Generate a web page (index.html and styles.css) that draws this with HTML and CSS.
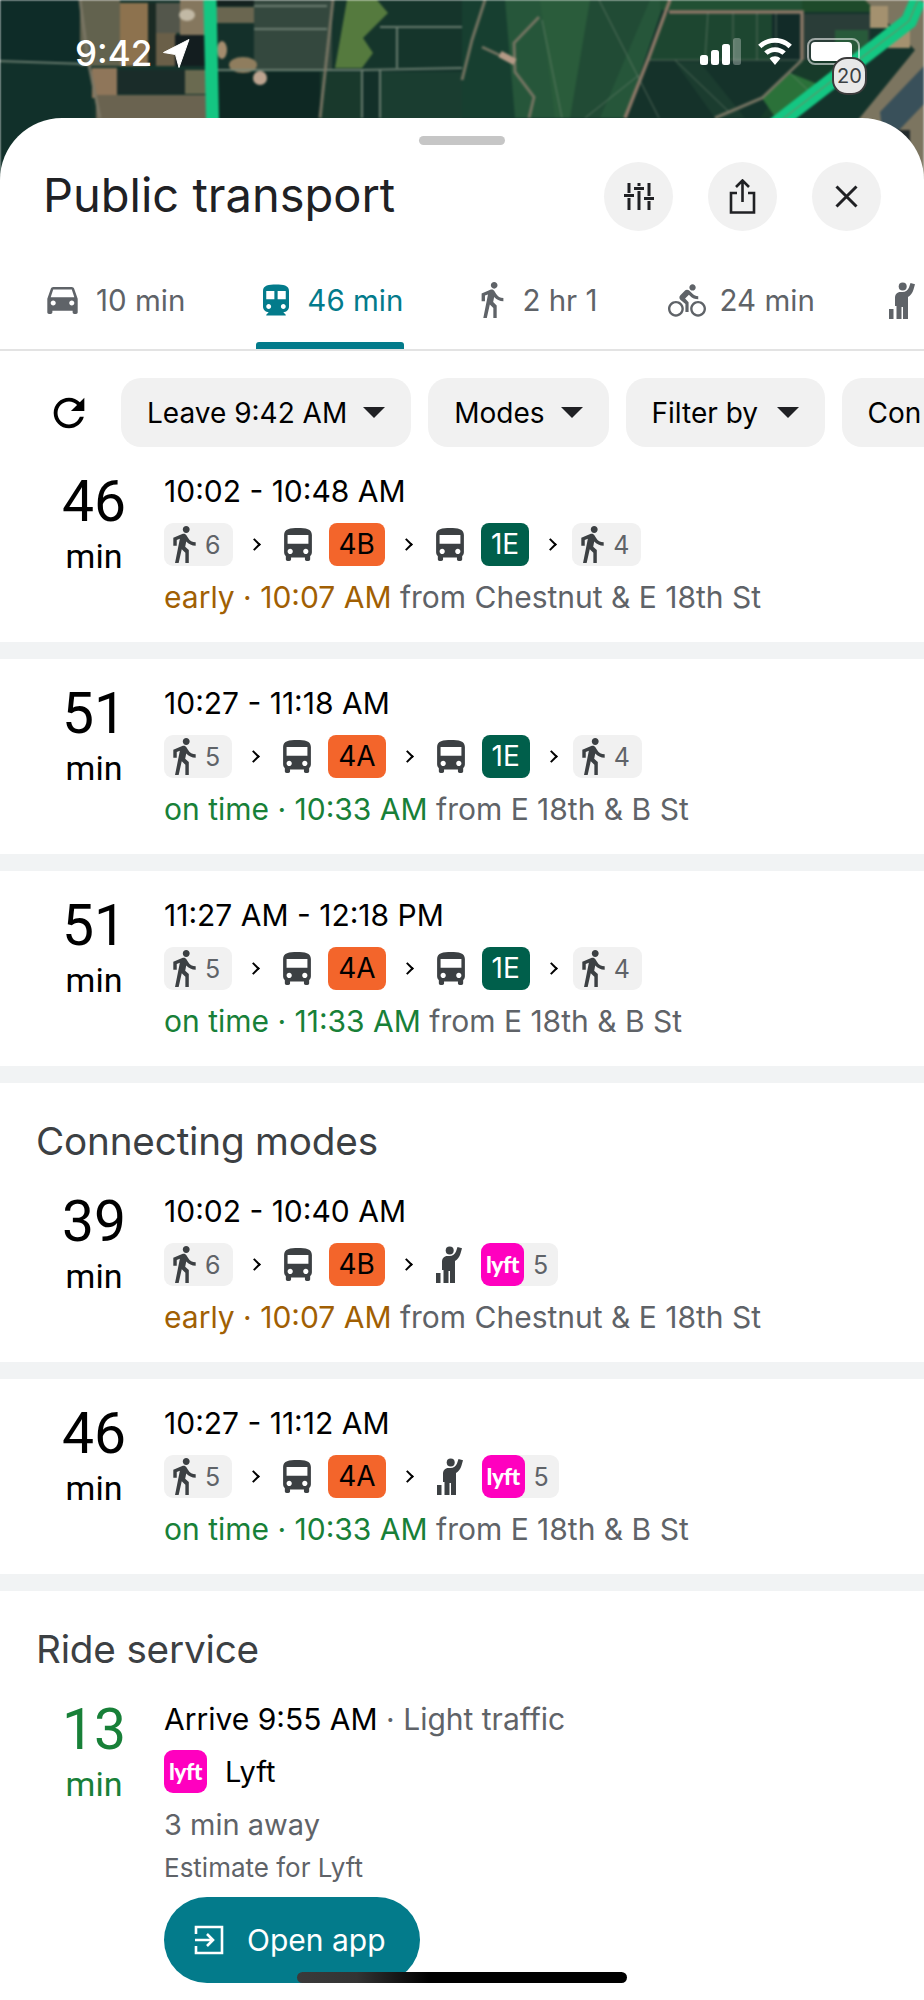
FILE: index.html
```html
<!DOCTYPE html>
<html lang="en">
<head>
<meta charset="utf-8">
<title>Public transport</title>
<link rel="stylesheet" href="styles.css">
</head>
<body>
<svg class="defs" width="0" height="0" aria-hidden="true">
  <symbol id="i-car" viewBox="3 5 18 16"><path fill-rule="evenodd" d="M18.92 6.01C18.72 5.42 18.16 5 17.5 5h-11c-.66 0-1.21.42-1.42 1.01L3 12v8c0 .55.45 1 1 1h1c.55 0 1-.45 1-1v-1h12v1c0 .55.45 1 1 1h1c.55 0 1-.45 1-1v-8l-2.08-5.99zM6.5 16c-.83 0-1.5-.67-1.5-1.5S5.67 13 6.5 13s1.5.67 1.5 1.5S7.33 16 6.5 16zm11 0c-.83 0-1.5-.67-1.5-1.5s.67-1.5 1.5-1.5 1.5.67 1.5 1.5-.67 1.5-1.5 1.5zM5 11l1.5-4.5h11L19 11H5z"/></symbol>
  <symbol id="i-train" viewBox="4 2 16 19"><path fill-rule="evenodd" d="M12 2c-4.42 0-8 .5-8 4v9.5C4 17.43 5.57 19 7.5 19L6 20.5v.5h12v-.5L16.5 19c1.93 0 3.5-1.57 3.5-3.5V6c0-3.5-3.58-4-8-4zM7.5 17c-.83 0-1.5-.67-1.5-1.5S6.67 14 7.5 14s1.5.67 1.5 1.5S8.33 17 7.5 17zm3.5-6H6V6h5v5zm5.5 6c-.83 0-1.5-.67-1.5-1.5s.67-1.5 1.5-1.5 1.5.67 1.5 1.5-.67 1.5-1.5 1.5zm1.5-6h-5V6h5v5z"/></symbol>
  <symbol id="i-walk" viewBox="6 1.5 13 21.5"><path d="M13.5 5.5c1.1 0 2-.9 2-2s-.9-2-2-2-2 .9-2 2 .9 2 2 2zM9.8 8.9L7 23h2.1l1.8-8 2.1 2v6h2v-7.5l-2.1-2 .6-3C14.8 12 16.8 13 19 13v-2c-1.9 0-3.5-1-4.3-2.4l-1-1.6c-.4-.6-1-1-1.7-1-.3 0-.5.1-.8.1L6 8.3V13h2V9.6l1.8-.7"/></symbol>
  <symbol id="i-bike" viewBox="0 1.5 24 20.5"><path d="M15.5 5.5c1.1 0 2-.9 2-2s-.9-2-2-2-2 .9-2 2 .9 2 2 2zM5 12c-2.8 0-5 2.2-5 5s2.2 5 5 5 5-2.2 5-5-2.2-5-5-5zm0 8.5c-1.9 0-3.5-1.6-3.5-3.5s1.6-3.5 3.5-3.5 3.5 1.6 3.5 3.5-1.6 3.5-3.5 3.5zm5.8-10l2.4-2.4.8.8c1.3 1.3 3 2.1 5.1 2.1V9c-1.5 0-2.7-.6-3.6-1.5l-1.9-1.9c-.5-.4-1-.6-1.6-.6s-1.1.2-1.4.6L7.8 8.4c-.4.4-.6.9-.6 1.4 0 .6.2 1.1.6 1.4L11 14v5h2v-6.2l-2.2-2.3zM19 12c-2.8 0-5 2.2-5 5s2.2 5 5 5 5-2.2 5-5-2.2-5-5-5zm0 8.5c-1.9 0-3.5-1.6-3.5-3.5s1.6-3.5 3.5-3.5 3.5 1.6 3.5 3.5-1.6 3.5-3.5 3.5z"/></symbol>
  <symbol id="i-hail" viewBox="0 0 27 37"><circle cx="13.700" cy="4.400" r="4"/><path d="M7.500 37V24H6v-8c0-3.500 2-6 5.500-6h2c3 0 5.500-2 6.500-4.500L21.500 1 26 2.200l-1.500 5.300c-1 3.500-3 6-5.500 7.500V37h-5V25h-1.500v12zM0 27h4.500v10H0z"/></symbol>
  <symbol id="i-bus" viewBox="4 2 16 19"><path fill-rule="evenodd" d="M4 16c0 .88.39 1.67 1 2.220V20c0 .55.45 1 1 1h1c.55 0 1-.45 1-1v-1h8v1c0 .55.45 1 1 1h1c.55 0 1-.45 1-1v-1.780c.61-.55 1-1.340 1-2.220V6c0-3.500-3.580-4-8-4s-8 .5-8 4v10zm3.500 1c-.83 0-1.500-.67-1.500-1.500S6.670 14 7.500 14s1.500.67 1.500 1.500S8.330 17 7.500 17zm9 0c-.83 0-1.500-.67-1.500-1.500s.67-1.500 1.500-1.500 1.500.67 1.500 1.500-.67 1.500-1.500 1.500zm1.500-6H6V6h12v5z"/></symbol>
</svg>

<div class="phone">
  <svg class="map" viewBox="0 0 924 190" preserveAspectRatio="none" aria-hidden="true">
    <rect width="924" height="190" fill="#14332b"/>
    <rect x="0" y="0" width="80" height="62" fill="#0e2c28"/>
    <rect x="0" y="64" width="92" height="126" fill="#11302a"/>
    <rect x="80" y="0" width="40" height="66" fill="#62624e"/>
    <rect x="120" y="3" width="28" height="63" fill="#8d724e"/>
    <rect x="148" y="3" width="8" height="62" fill="#1a2a24"/>
    <rect x="156" y="3" width="28" height="30" fill="#53564b"/>
    <rect x="180" y="0" width="26" height="40" fill="#85775e"/>
    <rect x="156" y="33" width="20" height="33" fill="#6a5f48"/>
    <rect x="175" y="35" width="31" height="31" fill="#131d1f"/>
    <rect x="92" y="68" width="25" height="30" fill="#8f765a"/>
    <rect x="117" y="70" width="68" height="24" fill="#1a2c29"/>
    <rect x="185" y="70" width="22" height="24" fill="#6a6a50"/>
    <rect x="96" y="95" width="112" height="95" fill="#6a6350"/>
    <rect x="216" y="0" width="38" height="6" fill="#14221f"/>
    <rect x="216" y="7" width="38" height="16" fill="#6a6650"/>
    <rect x="216" y="24" width="38" height="46" fill="#14302a"/>
    <rect x="254" y="0" width="78" height="70" fill="#34483e"/>
    <path d="M335 0H462V70H335z" fill="#15352b"/>
    <path d="M347 0H377L388 13 363 38 373 53 362 68H335z" fill="#557a3e"/>
    <rect x="218" y="72" width="105" height="118" fill="#0e2823"/>
    <rect x="320" y="72" width="42" height="118" fill="#19392c"/>
    <rect x="362" y="72" width="18" height="118" fill="#133029"/>
    <rect x="380" y="72" width="82" height="118" fill="#1a3d30"/>
    <path d="M462 0H505L520 118H462z" fill="#173f30"/>
    <path d="M505 0H665L625 118H515z" fill="#26563a"/>
    <path d="M580 0H650L600 118H570z" fill="#214b35"/>
    <path d="M540 0H590L570 118H555z" fill="#2a5c3b"/>
    <path d="M664 14H802V60H649z" fill="#1d4630"/>
    <path d="M772 14H802V60H772z" fill="#122b28"/>
    <path d="M649 60H802L762 98 715 118H625z" fill="#15322a"/>
    <path d="M675 62L700 62 745 118H715z" fill="#1b3c2f"/>
    <path d="M660 0H802V10H660z" fill="#215033"/>
    <path d="M802 0H870V12H802z" fill="#1e4a2a"/>
    <path d="M804 14H870V60H804z" fill="#2a3d38"/>
    <path d="M835 30H868V55H835z" fill="#285a3a"/>
    <path d="M802 60L860 60 790 118H760z" fill="#173b2a"/>
    <path d="M762 98L790 73 825 87 795 117H775z" fill="#2b7139"/>
    <path d="M865 0H924V190H850L858 120 915 50z" fill="#7c7560"/>
    <path d="M880 112L924 66V104L884 146z" fill="#39505a"/>
    <path d="M888 26h22v22h-22zM870 6h18v22h-18z" fill="#a4916f"/>
    <path d="M890 130h20v30h-20z" fill="#232b2c"/>
    <ellipse cx="243" cy="65" rx="14" ry="8" fill="#8f7d5e"/>
    <ellipse cx="260" cy="78" rx="7" ry="7" fill="#bda490"/>
    <ellipse cx="222" cy="50" rx="5" ry="9" fill="#a58c6e"/>
    <ellipse cx="187" cy="15" rx="8" ry="6" fill="#c2b9a5"/>
    <g fill="none" stroke="#76887a" stroke-width="2" opacity=".85">
      <path d="M0 61L85 64"/>
      <path d="M218 70H362L462 68"/>
      <path d="M254 29H327M254 6H327"/>
      <path d="M362 70V118M380 70V118"/>
      <path d="M397 27V68M380 27H462"/>
    </g>
    <g fill="none" stroke="#7c7866" stroke-width="3" opacity=".9">
      <path d="M80 0L88 60 100 118"/>
      <path d="M333 0L320 118"/>
      <path d="M485 0L472 40 462 80"/>
      <path d="M539 17L514 43 515 72 534 97 529 118"/>
      <path d="M482 47L510 60"/>
      <path d="M802 60L762 98 715 118"/>
    </g>
    <g fill="none" stroke="#8a7766" stroke-width="3.500">
      <path d="M670 0L649 57 625 118"/>
      <path d="M669 12H802V60"/>
    </g>
    <g fill="none" stroke="#7f907d" stroke-width="1" opacity=".55">
      <path d="M599 0L659 118M542 20L562 118M649 60H802M639 75L585 118M675 60L729 112M708 12L705 60M733 12V60M757 12V60M776 12V60M790 73L815 97"/>
    </g>
    <path d="M500 54L515 62" stroke="#b49a86" stroke-width="7" fill="none"/>
    <g fill="none">
      <path d="M210 0L214 190" stroke="#14c682" stroke-width="13"/>
      <path d="M918 0L909 21 775 125" stroke="#14c682" stroke-width="16"/>
      <path d="M918 0L909 21 775 125" stroke="#8a7a5a" stroke-width="1"/>
    </g>
  </svg>

  <div class="status">
    <div class="clock">
      <span class="clock-time">9:42</span>
      <svg class="loc" viewBox="0 0 27 29"><path d="M26 0.500L0.500 13.500 12.500 15.500 16 28.500z" fill="#fff" stroke="#fff" stroke-linejoin="round"/></svg>
    </div>
    <div class="sys">
      <div class="signal">
        <i class="bar bar-1"></i><i class="bar bar-2"></i><i class="bar bar-3"></i><i class="bar bar-4"></i>
      </div>
      <svg class="wifi" viewBox="0 0 36 28"><path d="M18 0C11 0 5 2.700 0.500 7l3.500 3.500C7.600 7 12.500 5 18 5s10.400 2 14 5.500L35.500 7C31 2.700 25 0 18 0zM18 9.500c-4.400 0-8.300 1.700-11.200 4.400l3.500 3.500c2-1.800 4.700-3 7.700-3s5.700 1.200 7.700 3l3.500-3.500C26.300 11.200 22.400 9.500 18 9.500zM18 19c-2.200 0-4.200.9-5.600 2.200L18 28l5.600-6.800C22.200 19.900 20.200 19 18 19z" fill="#fff"/></svg>
      <div class="battery"><i class="battery-fill"></i></div>
    </div>
  </div>
  <div class="shield">20</div>

  <main class="sheet">
    <div class="handle"></div>
    <header class="head">
      <h1 class="title">Public transport</h1>
      <div class="actions">
        <button class="round"><svg class="ic-tune" viewBox="0 0 30 27"><path d="M5 0v10M5 15v12M15 0v3M15 8v19M25 0v13M25 18v9M0 12.500h10M10 5.500h10M20 15.500h10" fill="none" stroke="#202124" stroke-width="3"/></svg></button>
        <button class="round"><svg class="ic-share" viewBox="0 0 27 35"><path d="M13.500 23V2M7 8l6.500-6.500L20 8M8 14H2v19.500h23V14h-6" fill="none" stroke="#202124" stroke-width="2.600"/></svg></button>
        <button class="round"><svg class="ic-close" viewBox="0 0 23 23"><path d="M1.500 1.500l20 20M21.500 1.500l-20 20" fill="none" stroke="#202124" stroke-width="3"/></svg></button>
      </div>
    </header>

    <nav class="tabs">
      <div class="tab"><svg class="tab-car"><use href="#i-car"/></svg><span>10 min</span></div>
      <div class="tab tab-on"><svg class="tab-train"><use href="#i-train"/></svg><span>46 min</span></div>
      <div class="tab"><svg class="tab-walk"><use href="#i-walk"/></svg><span>2 hr 1</span></div>
      <div class="tab tab-bk"><svg class="tab-bike"><use href="#i-bike"/></svg><span>24 min</span></div>
      <div class="tab tab-last"><svg class="tab-hail"><use href="#i-hail"/></svg></div>
    </nav>

    <div class="filters">
      <svg class="refresh" viewBox="0 0 24 24"><path d="M17.650 6.350C16.200 4.900 14.210 4 12 4c-4.420 0-7.990 3.580-7.990 8s3.570 8 7.990 8c3.730 0 6.840-2.550 7.730-6h-2.080c-.82 2.330-3.040 4-5.650 4-3.310 0-6-2.690-6-6s2.690-6 6-6c1.660 0 3.140.69 4.220 1.780L13 11h7V4l-2.350 2.350z"/></svg>
      <div class="chip">Leave 9:42 AM<i class="caret"></i></div>
      <div class="chip">Modes<i class="caret"></i></div>
      <div class="chip chip-filter">Filter by<i class="caret"></i></div>
      <div class="chip chip-more">Con</div>
    </div>

    <section class="row">
      <div class="dur"><div class="dur-n">46</div><div class="dur-u">min</div></div>
      <div class="info">
        <div class="times">10:02 - 10:48 AM</div>
        <div class="legs">
          <span class="pill"><svg class="walk"><use href="#i-walk"/></svg>6</span><i class="chev"></i>
          <svg class="bus"><use href="#i-bus"/></svg><span class="line orange">4B</span><i class="chev"></i>
          <svg class="bus"><use href="#i-bus"/></svg><span class="line teal">1E</span><i class="chev chev-end"></i>
          <span class="pill"><svg class="walk"><use href="#i-walk"/></svg>4</span>
        </div>
        <div class="when"><span class="early">early · 10:07 AM</span> from Chestnut &amp; E 18th St</div>
      </div>
    </section>

    <section class="row">
      <div class="dur"><div class="dur-n">51</div><div class="dur-u">min</div></div>
      <div class="info">
        <div class="times">10:27 - 11:18 AM</div>
        <div class="legs">
          <span class="pill"><svg class="walk"><use href="#i-walk"/></svg>5</span><i class="chev"></i>
          <svg class="bus"><use href="#i-bus"/></svg><span class="line orange">4A</span><i class="chev"></i>
          <svg class="bus"><use href="#i-bus"/></svg><span class="line teal">1E</span><i class="chev chev-end"></i>
          <span class="pill"><svg class="walk"><use href="#i-walk"/></svg>4</span>
        </div>
        <div class="when"><span class="ontime">on time · 10:33 AM</span> from E 18th &amp; B St</div>
      </div>
    </section>

    <section class="row">
      <div class="dur"><div class="dur-n">51</div><div class="dur-u">min</div></div>
      <div class="info">
        <div class="times">11:27 AM - 12:18 PM</div>
        <div class="legs">
          <span class="pill"><svg class="walk"><use href="#i-walk"/></svg>5</span><i class="chev"></i>
          <svg class="bus"><use href="#i-bus"/></svg><span class="line orange">4A</span><i class="chev"></i>
          <svg class="bus"><use href="#i-bus"/></svg><span class="line teal">1E</span><i class="chev chev-end"></i>
          <span class="pill"><svg class="walk"><use href="#i-walk"/></svg>4</span>
        </div>
        <div class="when"><span class="ontime">on time · 11:33 AM</span> from E 18th &amp; B St</div>
      </div>
    </section>

    <h2 class="section">Connecting modes</h2>

    <section class="row">
      <div class="dur"><div class="dur-n">39</div><div class="dur-u">min</div></div>
      <div class="info">
        <div class="times">10:02 - 10:40 AM</div>
        <div class="legs">
          <span class="pill"><svg class="walk"><use href="#i-walk"/></svg>6</span><i class="chev"></i>
          <svg class="bus"><use href="#i-bus"/></svg><span class="line orange">4B</span><i class="chev"></i>
          <svg class="hail"><use href="#i-hail"/></svg>
          <span class="pill pill-lyft"><span class="lyft">lyft</span>5</span>
        </div>
        <div class="when"><span class="early">early · 10:07 AM</span> from Chestnut &amp; E 18th St</div>
      </div>
    </section>

    <section class="row">
      <div class="dur"><div class="dur-n">46</div><div class="dur-u">min</div></div>
      <div class="info">
        <div class="times">10:27 - 11:12 AM</div>
        <div class="legs">
          <span class="pill"><svg class="walk"><use href="#i-walk"/></svg>5</span><i class="chev"></i>
          <svg class="bus"><use href="#i-bus"/></svg><span class="line orange">4A</span><i class="chev"></i>
          <svg class="hail"><use href="#i-hail"/></svg>
          <span class="pill pill-lyft"><span class="lyft">lyft</span>5</span>
        </div>
        <div class="when"><span class="ontime">on time · 10:33 AM</span> from E 18th &amp; B St</div>
      </div>
    </section>

    <h2 class="section">Ride service</h2>

    <section class="row row-last">
      <div class="dur dur-green"><div class="dur-n">13</div><div class="dur-u">min</div></div>
      <div class="info">
        <div class="times">Arrive 9:55 AM <span class="muted">· Light traffic</span></div>
        <div class="provider"><span class="lyft lyft-solo">lyft</span><span class="provider-name">Lyft</span></div>
        <div class="away">3 min away</div>
        <div class="estimate">Estimate for Lyft</div>
        <button class="open">
          <svg class="open-ic" viewBox="0 0 30 30"><path d="M2 9V2h26v26H2v-7M1 15h18M13 9l6 6-6 6" fill="none" stroke="#fff" stroke-width="2.600"/></svg>
          Open app
        </button>
      </div>
    </section>
  </main>
  <div class="homebar"></div>
</div>
</body>
</html>
```
FILE: styles.css
```css
* { box-sizing: border-box; }
html, body { margin: 0; padding: 0; background: #fff; }
body { font-family: Inter, Roboto, sans-serif; color: #000; }
.defs { position: absolute; }
svg { display: block; fill: currentColor; }
i { display: block; font-style: normal; }

.phone { position: relative; width: 924px; height: 2000px; overflow: hidden; }
.map { position: absolute; left: 0; top: 0; width: 924px; height: 190px; filter: blur(1.2px); }

.status { position: absolute; left: 0; top: 0; width: 924px; height: 118px; }
.clock { position: absolute; left: 75px; top: 30px; display: flex; align-items: center; gap: 11px; color: #fff; }
.clock-time { font: 500 35px/46px Inter, Roboto, sans-serif; }
.loc { width: 27px; height: 29px; }
.sys { position: absolute; left: 700px; top: 38px; display: flex; align-items: flex-end; height: 27px; }
.signal { display: flex; align-items: flex-end; gap: 3px; width: 45px; height: 27px; }
.bar { width: 8px; background: #fff; border-radius: 2.500px; }
.bar-1 { height: 10px; }
.bar-2 { height: 15px; }
.bar-3 { height: 21px; }
.bar-4 { height: 27px; opacity: .3; }
.wifi { width: 36px; height: 27px; margin-left: 12px; }
.battery { width: 53px; height: 27px; margin-left: 14px; border: 2px solid rgba(255,255,255,.55); border-radius: 8px; padding: 2px; }
.battery-fill { width: 41px; height: 19px; background: #fff; border-radius: 4px; }
.shield { position: absolute; left: 832px; top: 57px; width: 35px; height: 38px; border-radius: 15px; background: #e8e8e8; border: 2px solid #3c3c3c; font: 400 20px/34px Inter, Roboto, sans-serif; text-align: center; color: #3c4043; }

.sheet { position: absolute; left: 0; top: 118px; width: 924px; height: 1882px; background: #fff; border-radius: 62px 62px 0 0; }
.handle { position: absolute; left: 419px; top: 18px; width: 86px; height: 9px; background: #c6c6c6; border-radius: 5px; }
.head { height: 113px; padding: 44px 43px 0 43px; display: flex; justify-content: space-between; align-items: flex-start; }
.title { margin: 0; font: 400 47px/66px Inter, Roboto, sans-serif; color: #202124; }
.actions { display: flex; gap: 35px; }
.round { width: 69px; height: 69px; padding: 0; border: 0; border-radius: 50%; background: #f1f1f1; display: flex; align-items: center; justify-content: center; }
.ic-tune { width: 30px; height: 27px; }
.ic-share { width: 27px; height: 35px; }
.ic-close { width: 23px; height: 23px; }

.tabs { height: 120px; padding: 0 0 0 47px; border-bottom: 2px solid #e3e3e3; display: flex; gap: 78px; align-items: flex-start; overflow: hidden; position: relative; }
.tab { position: relative; display: flex; align-items: center; height: 118px; padding-top: 20px; font-size: 29.500px; color: #5f6368; flex: none; gap: 18px; }
.tab-on { color: #037b8b; }
.tab-on::after { content: ""; position: absolute; left: -7px; right: -1px; bottom: 0; height: 7px; background: #037b8b; border-radius: 3px 3px 0 0; }
.tab-car { width: 31px; height: 27px; }
.tab-train { width: 26px; height: 32px; }
.tab-walk { width: 23px; height: 36px; }
.tab-bike { width: 38px; height: 33px; }
.tab-hail { width: 27px; height: 37px; }
.tab-bk { gap: 14px; margin-left: -8px; }
.tab-last { margin-left: -4px; }

.filters { display: flex; align-items: center; gap: 17px; padding: 27px 0 0 46px; overflow: hidden; }
.refresh { width: 46px; height: 46px; flex: none; margin-right: 12px; color: #000; }
.chip { flex: none; height: 69px; padding: 0 26px; border-radius: 20px; background: #f1f1f1; display: flex; align-items: center; gap: 16px; font-size: 28px; }
.chip-filter { width: 199px; justify-content: space-between; }
.chip-more { width: 120px; }
.caret { width: 0; height: 0; border-left: 11px solid transparent; border-right: 11px solid transparent; border-top: 11px solid #202124; }

.row { height: 212px; border-bottom: 17px solid #f1f3f4; padding: 27px 0 0 36px; display: flex; }
.row-last { border-bottom: 0; height: auto; }
.dur { width: 116px; flex: none; text-align: center; }
.dur-n { font: 400 57px/54px Roboto, sans-serif; margin-top: 1px; }
.dur-u { font: 400 34px/44px Roboto, sans-serif; margin-top: 5px; }
.dur-green { color: #188038; }
.info { margin-left: 12px; min-width: 0; }
.times { font-size: 30px; line-height: 34px; white-space: nowrap; }
.muted { color: #5f6368; }
.legs { display: flex; align-items: center; height: 43px; margin-top: 15px; }
.pill { height: 43px; display: flex; align-items: center; gap: 9px; padding: 0 12px 0 9px; background: #f1f1f1; border-radius: 9px; font-size: 25px; color: #5f6368; }
.walk { width: 23px; height: 37px; color: #3c4043; }
.chev { width: 9px; height: 9px; margin: 0 25px 0 17px; border-top: 2px solid #000; border-right: 2px solid #000; transform: rotate(45deg); }
.chev-end { margin-right: 17px; }
.bus { width: 28px; height: 33px; color: #3c4043; flex: none; }
.hail { width: 27px; height: 37px; color: #3c4043; margin-right: 18px; flex: none; }
.line { height: 43px; margin-left: 17px; padding: 0 10px; border-radius: 8px; font-size: 28px; line-height: 43px; }
.orange { background: #f3652b; color: #000; }
.teal { background: #005f4b; color: #fff; }
.lyft { display: flex; align-items: center; justify-content: center; width: 43px; height: 43px; background: #ff00bf; color: #fff; border-radius: 9px; font: 900 23px/1 Lato, sans-serif; letter-spacing: -.5px; }
.pill-lyft { padding: 0 10px 0 0; gap: 9px; }
.when { font-size: 30px; line-height: 36px; margin-top: 13px; color: #5f6368; white-space: nowrap; }
.early { color: #a15f03; }
.ontime { color: #188038; }

.section { margin: 0; height: 84px; padding: 41px 0 0 36px; font: 400 38.700px/34px Inter, Roboto, sans-serif; letter-spacing: -.2px; color: #3c4043; }

.provider { display: flex; align-items: center; gap: 18px; margin-top: 14px; height: 43px; }
.provider-name { font-size: 29px; }
.away { font-size: 29px; line-height: 34px; margin-top: 15px; color: #5f6368; }
.estimate { font-size: 26px; line-height: 30px; margin-top: 11px; color: #5f6368; }
.open { margin-top: 14px; width: 256px; height: 86px; padding: 0 0 0 30px; border: 0; border-radius: 43px; background: #037b8b; color: #fff; display: flex; align-items: center; gap: 23px; font: 400 30px/1 Inter, Roboto, sans-serif; }
.open-ic { width: 30px; height: 30px; }
.homebar { position: absolute; left: 297px; top: 1972px; width: 330px; height: 11px; border-radius: 6px; background: linear-gradient(90deg, #3a3a3a 0, #333 18%, #000 40%); }
```
